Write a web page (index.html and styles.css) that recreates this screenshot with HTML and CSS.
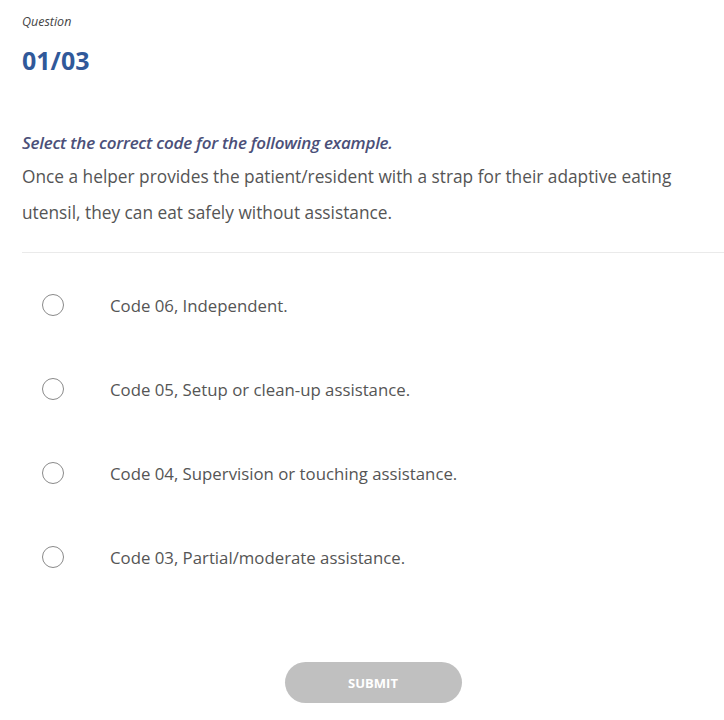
FILE: index.html
```html
<!DOCTYPE html>
<html lang="en">
<head>
  <meta charset="UTF-8" />
  <meta name="viewport" content="width=device-width, initial-scale=1.0"/>
  <title>Question 01/03</title>
  <link rel="stylesheet" href="styles.css">
</head>
<body>
  <div class="quiz">
    <div class="cabecalho">
      <div class="rotulo">Question</div>
      <div class="contador">01/03</div>
    </div>

    <div class="enunciado">
      <p class="instrucao">Select the correct code for the following example.</p>
      <p class="texto">Once a helper provides the patient/resident with a strap for their adaptive eating utensil, they can eat safely without assistance.</p>
    </div>

    <ul class="opcoes">
      <li class="opcao"><span class="radio"></span><span class="opcao-texto">Code 06, Independent.</span></li>
      <li class="opcao"><span class="radio"></span><span class="opcao-texto">Code 05, Setup or clean-up assistance.</span></li>
      <li class="opcao"><span class="radio"></span><span class="opcao-texto">Code 04, Supervision or touching assistance.</span></li>
      <li class="opcao"><span class="radio"></span><span class="opcao-texto">Code 03, Partial/moderate assistance.</span></li>
    </ul>

    <div class="acoes">
      <button class="botao-enviar" disabled>SUBMIT</button>
    </div>
  </div>
</body>
</html>
```

FILE: styles.css
```css
body {
  margin: 0;
  font-family: "Open Sans", sans-serif;
  background: #ffffff;
  color: #555555;
}

.quiz {
  padding: 14px 0 0 22px;
}

.rotulo {
  font-size: 12.5px;
  font-style: italic;
  color: #444444;
  line-height: 16px;
}

.contador {
  margin-top: 15px;
  font-size: 25px;
  font-weight: bold;
  color: #30599a;
  line-height: 30px;
}

.enunciado {
  margin-top: 54px;
  border-bottom: 1px solid #eaeaea;
  padding-bottom: 21px;
}

.instrucao {
  margin: 0 0 2px;
  font-size: 17px;
  font-style: italic;
  font-weight: 600;
  color: #4b5079;
  letter-spacing: -0.25px;
  line-height: 28px;
}

.texto {
  margin: 0;
  font-size: 17.3px;
  color: #555555;
  line-height: 36px;
  max-width: 665px;
}

.opcoes {
  list-style: none;
  margin: 0;
  padding: 10px 0 0 20px;
}

.opcao {
  display: flex;
  align-items: center;
  height: 84px;
}

.radio {
  width: 20px;
  height: 20px;
  border: 1px solid #8a8a8a;
  border-radius: 50%;
  flex-shrink: 0;
}

.opcao-texto {
  margin-left: 46px;
  font-size: 16.8px;
  color: #555555;
}

.acoes {
  display: flex;
  justify-content: center;
  margin-top: 63px;
}

.botao-enviar {
  width: 177px;
  height: 41px;
  border: none;
  border-radius: 21px;
  background-color: #c0c0c0;
  color: #ffffff;
  font-family: "Open Sans", sans-serif;
  font-size: 13px;
  font-weight: bold;
}
```
